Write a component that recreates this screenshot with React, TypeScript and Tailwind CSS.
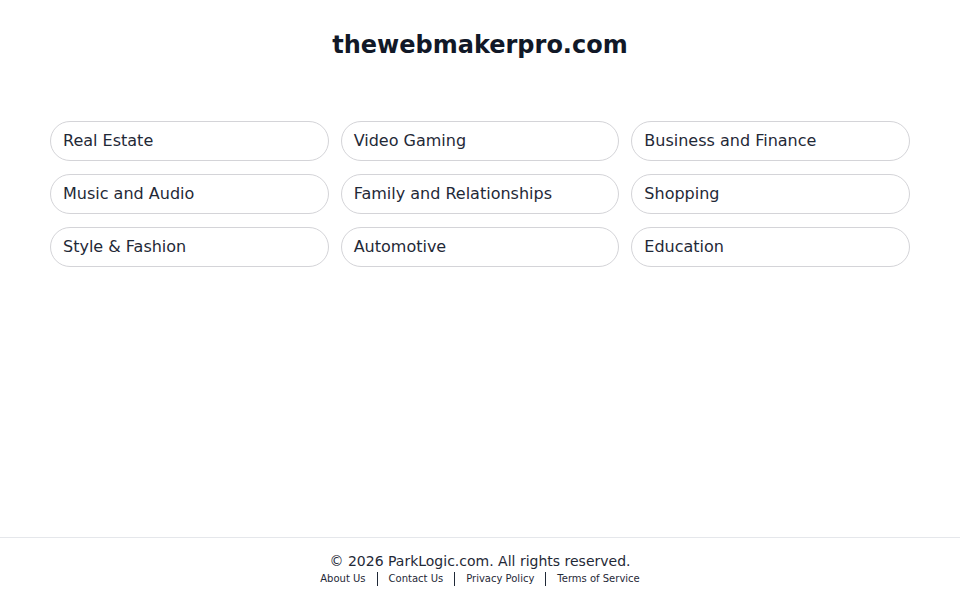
const categories = [
  "Real Estate",
  "Video Gaming",
  "Business and Finance",
  "Music and Audio",
  "Family and Relationships",
  "Shopping",
  "Style & Fashion",
  "Automotive",
  "Education",
];

const links = ["About Us", "Contact Us", "Privacy Policy", "Terms of Service"];

export default function App() {
  return (
    <div
      className="min-h-screen flex flex-col bg-white text-[#1f2937]"
      style={{ fontFamily: '"DejaVu Sans", sans-serif' }}
    >
      <main className="flex-1 px-[50px]">
        <h1 className="pt-[30px] text-center text-2xl leading-[30px] font-bold text-[#111827]">
          thewebmakerpro.com
        </h1>
        <div className="mt-[61px] grid grid-cols-3 gap-x-3 gap-y-[13px]">
          {categories.map((c) => (
            <a
              key={c}
              href="#"
              className="h-10 flex items-center px-3 rounded-full border border-[#d4d4d8] text-base text-[#1f2937]"
            >
              {c}
            </a>
          ))}
        </div>
      </main>

      <footer className="border-t border-[#e5e7eb] pt-[13px] pb-[13px] text-center">
        <p className="text-sm leading-5 text-[#1f2937]">© 2026 ParkLogic.com. All rights reserved.</p>
        <div className="flex items-center justify-center text-[10px] leading-4 text-[#1f2937]">
          {links.map((l, i) => (
            <div key={l} className="flex items-center">
              {i > 0 && <span className="mx-[11px] h-[14px] w-px bg-[#1f2937]" />}
              <a href="#">{l}</a>
            </div>
          ))}
        </div>
      </footer>
    </div>
  );
}
